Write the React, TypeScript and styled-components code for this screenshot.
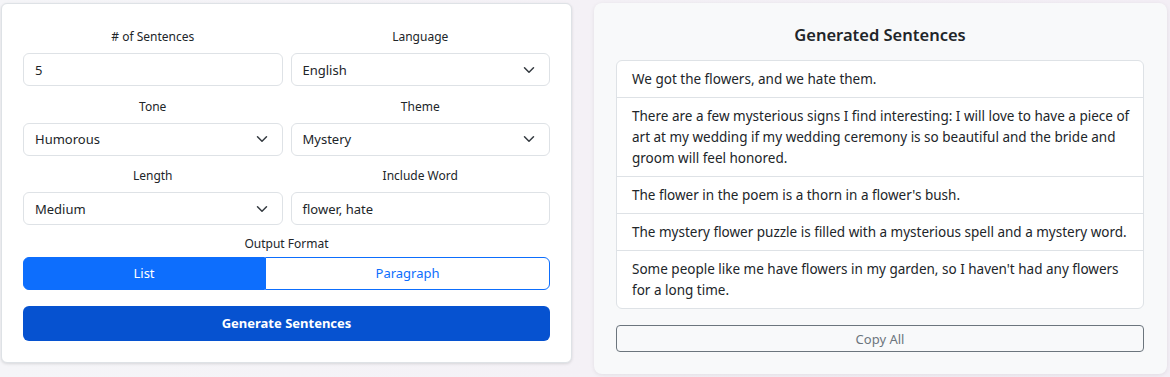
import React from "react";
import styled, { createGlobalStyle } from "styled-components";

const Global = createGlobalStyle`
  html, body { margin: 0; padding: 0; }
  body {
    background: linear-gradient(90deg, #f5f5f8 0%, #f4f1f6 50%, #f3eef5 100%);
    font-family: "Noto Sans", "Open Sans", sans-serif;
    color: #212529;
    min-height: 377px;
  }
  * { box-sizing: border-box; }
`;

const Page = styled.div`
  display: flex;
  align-items: flex-start;
  gap: 22px;
  padding: 3px 0 0 1px;
`;

const FormCard = styled.div`
  flex: 0 0 571px;
  background: #fff;
  border: 1px solid #dee2e6;
  border-radius: 6px;
  box-shadow: 0 1px 3px rgba(0, 0, 0, 0.12);
  padding: 22px 21px 21px 21px;
  display: flex;
  flex-direction: column;
`;

const FieldGrid = styled.div`
  display: grid;
  grid-template-columns: 1fr 1fr;
  column-gap: 8px;
  row-gap: 9.5px;
`;

const Field = styled.div`
  display: flex;
  flex-direction: column;
`;

const Label = styled.label<{ $tight?: boolean }>`
  display: block;
  text-align: center;
  font-size: 12px;
  line-height: 21px;
  margin: ${(p) => (p.$tight ? "8px 0 2.5px" : "0 0 6px")};
  color: #212529;
`;

const Control = styled.div`
  position: relative;
  height: 33px;
  border: 1px solid #dee2e6;
  border-radius: 6px;
  background: #fff;
  padding: 0 11px;
  display: flex;
  align-items: center;
  font-size: 13px;
  color: #212529;
`;

const Chevron = styled.svg`
  position: absolute;
  right: 12px;
  top: 50%;
  width: 16px;
  height: 12px;
  margin-top: -6px;
`;

const Toggle = styled.div`
  display: flex;
  height: 33px;
`;

const ToggleBtn = styled.button<{ $active?: boolean }>`
  flex: 1 1 auto;
  font-family: inherit;
  font-size: 13px;
  padding: 0 24px;
  border: 1px solid #0d6efd;
  background: ${(p) => (p.$active ? "#0d6efd" : "#fff")};
  color: ${(p) => (p.$active ? "#fff" : "#0d6efd")};
  &:first-child { border-radius: 6px 0 0 6px; }
  &:last-child { border-radius: 0 6px 6px 0; }
`;

const Generate = styled.button`
  margin-top: 16px;
  height: 35px;
  border: none;
  border-radius: 6px;
  background: #0652d0;
  color: #fff;
  font-family: inherit;
  font-weight: 700;
  font-size: 13px;
`;

const Results = styled.div`
  flex: 0 0 573px;
  background: #f8f9fa;
  border-radius: 8px;
  box-shadow: 0 1px 4px rgba(0, 0, 0, 0.08);
  padding: 18px 23px 22px 22px;
  display: flex;
  flex-direction: column;
`;

const Title = styled.h2`
  margin: 0 0 12px;
  text-align: center;
  font-size: 16.5px;
  line-height: 27px;
  font-weight: 600;
  color: #212529;
`;

const List = styled.ul`
  list-style: none;
  margin: 0;
  padding: 0;
  background: #fff;
  border: 1px solid #dee2e6;
  border-radius: 6px;
`;

const Item = styled.li`
  padding: 7.5px 8px 7.5px 15px;
  font-size: 13.5px;
  line-height: 21px;
  color: #212529;
  & + & { border-top: 1px solid #dee2e6; }
`;

const CopyBtn = styled.button`
  margin-top: 16px;
  height: 27px;
  border: 1px solid #6c757d;
  border-radius: 4px;
  background: transparent;
  color: #6c757d;
  font-family: inherit;
  font-size: 13px;
`;

const ChevronIcon = () => (
  <Chevron viewBox="0 0 16 16">
    <path d="m2 5 6 6 6-6" fill="none" stroke="#343a40" strokeWidth="2" strokeLinecap="round" strokeLinejoin="round" />
  </Chevron>
);

const fields: { label: string; value: string; select?: boolean }[] = [
  { label: "# of Sentences", value: "5" },
  { label: "Language", value: "English", select: true },
  { label: "Tone", value: "Humorous", select: true },
  { label: "Theme", value: "Mystery", select: true },
  { label: "Length", value: "Medium", select: true },
  { label: "Include Word", value: "flower, hate" },
];

const sentences = [
  "We got the flowers, and we hate them.",
  "There are a few mysterious signs I find interesting: I will love to have a piece of art at my wedding if my wedding ceremony is so beautiful and the bride and groom will feel honored.",
  "The flower in the poem is a thorn in a flower's bush.",
  "The mystery flower puzzle is filled with a mysterious spell and a mystery word.",
  "Some people like me have flowers in my garden, so I haven't had any flowers for a long time.",
];

export default function App() {
  return (
    <>
      <Global />
      <Page>
        <FormCard>
          <FieldGrid>
            {fields.map((f) => (
              <Field key={f.label}>
                <Label>{f.label}</Label>
                <Control>
                  {f.value}
                  {f.select && <ChevronIcon />}
                </Control>
              </Field>
            ))}
          </FieldGrid>
          <Label $tight>Output Format</Label>
          <Toggle>
            <ToggleBtn $active>List</ToggleBtn>
            <ToggleBtn>Paragraph</ToggleBtn>
          </Toggle>
          <Generate>Generate Sentences</Generate>
        </FormCard>
        <Results>
          <Title>Generated Sentences</Title>
          <List>
            {sentences.map((s) => (
              <Item key={s}>{s}</Item>
            ))}
          </List>
          <CopyBtn>Copy All</CopyBtn>
        </Results>
      </Page>
    </>
  );
}
